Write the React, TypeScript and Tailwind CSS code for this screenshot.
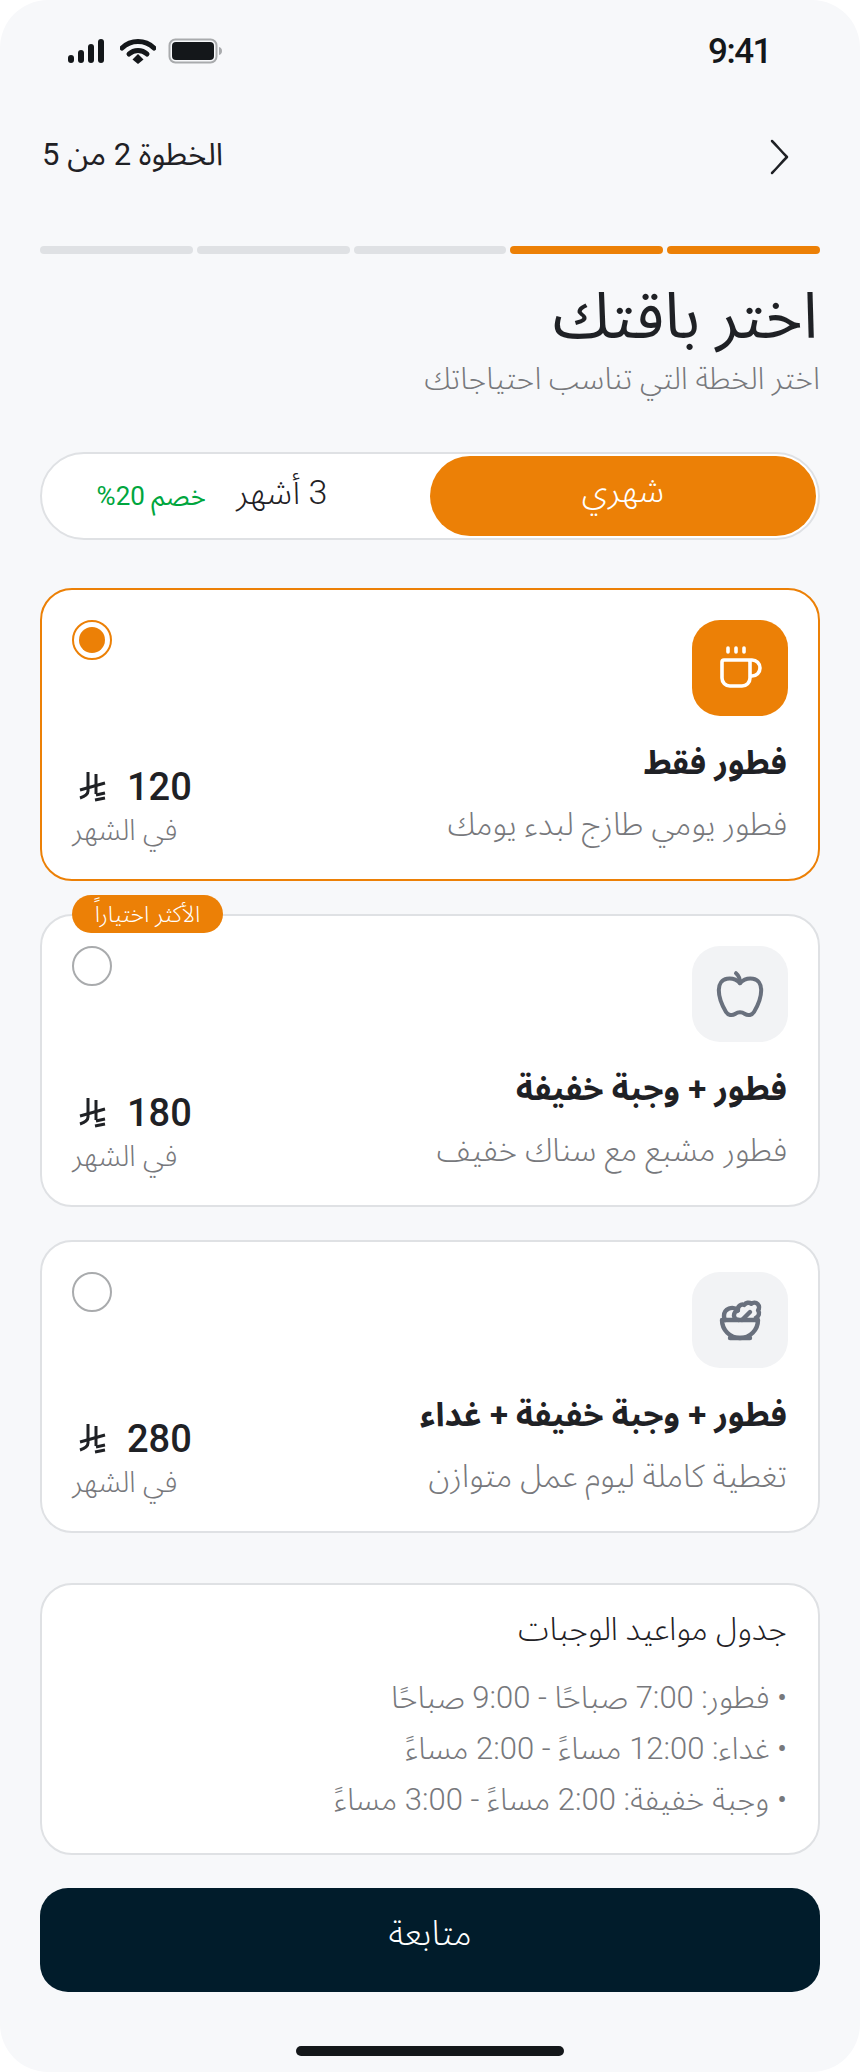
import { Coffee, Salad } from "lucide-react";
import type { ReactNode } from "react";

const arabic = "font-['Roboto','Noto_Sans_Arabic','Noto_Sans','DejaVu_Sans',sans-serif]";

function StatusIcons() {
  return (
    <div dir="ltr" className="flex items-center">
      <svg className="mr-[16px]" width="36" height="24" viewBox="0 0 36 24" fill="#14171a">
        <rect x="0" y="16" width="6" height="8" rx="3" />
        <rect x="10" y="11" width="6" height="13" rx="3" />
        <rect x="20" y="5" width="6" height="19" rx="3" />
        <rect x="30" y="0" width="6" height="24" rx="3" />
      </svg>
      <svg className="mr-[12px]" width="36" height="26" viewBox="0 0 36 26" fill="none">
        <path d="M2 10a23 23 0 0 1 32 0" stroke="#14171a" strokeWidth="5" strokeLinecap="round" />
        <path d="M9 16a13 13 0 0 1 18 0" stroke="#14171a" strokeWidth="5" strokeLinecap="round" />
        <path d="M12.5 21.5 18 16l5.500 5.500L18 26z" fill="#14171a" />
      </svg>
      <svg width="56" height="26" viewBox="0 0 56 26" fill="none">
        <rect x="1.500" y="1.500" width="47" height="23" rx="6" stroke="#a9abad" strokeWidth="2" />
        <rect x="4" y="4" width="42" height="18" rx="4" fill="#14171a" />
        <path d="M51 9c2 .5 3 2 3 4s-1 3.500-3 4z" fill="#a9abad" />
      </svg>
    </div>
  );
}

function AppleIcon() {
  return (
    <svg width="48" height="48" viewBox="0 0 24 24" fill="none" stroke="currentColor" strokeWidth="2" strokeLinecap="round" strokeLinejoin="round">
      <path d="M12 6.600C10.500 5 8 4 5.500 4.400C3 4.800 1.400 7 1.400 10C1.400 14 3.500 18.500 5 21C6 22.600 8 23 9.500 22C11 21 13 21 14.500 22C16 23 18 22.600 19 21C20.500 18.500 22.600 14 22.600 10C22.600 7 21 4.800 18.500 4.400C16 4 13.500 5 12 6.600Z" />
      <path d="M10 1.600c1.200 1 2 3 2 5" />
    </svg>
  );
}

function Riyal() {
  return (
    <svg width="30" height="32" viewBox="0 0 30 32" fill="none" stroke="#1f2125" strokeWidth="3">
      <path d="M10 1v19c0 3-2 5-8 7" />
      <path d="M18 3v20" />
      <path d="M2 19 27 12" />
      <path d="M18 24l9-2" />
      <path d="M17 29 27 27" />
    </svg>
  );
}

function Radio({ on }: { on: boolean }) {
  return (
    <div className={`flex h-[40px] w-[40px] items-center justify-center rounded-full border-2 bg-white ${on ? "border-[#ec8006]" : "border-[#a9abad]"}`}>
      {on ? <div className="h-[26px] w-[26px] rounded-full bg-[#ec8006]" /> : null}
    </div>
  );
}

function Plan(props: { icon: ReactNode; on?: boolean; title: string; desc: string; price: string; badge?: boolean }) {
  const { icon, on = false, title, desc, price, badge = false } = props;
  return (
    <div className={`relative h-[293px] rounded-[32px] border-2 bg-white pl-[30px] pr-[30px] pt-[30px] ${on ? "border-[#ec8006]" : "border-[#dfe1e4]"}`}>
      {badge ? (
        <div className="absolute left-[30px] top-[-21px] flex h-[38px] w-[151px] items-center justify-center rounded-full bg-[#ec8006] text-[23px] font-light leading-none text-white">
          الأكثر اختياراً
        </div>
      ) : null}
      <div className="flex items-start justify-between">
        <div className={`flex h-[96px] w-[96px] items-center justify-center rounded-[28px] ${on ? "bg-[#ec8006] text-white" : "bg-[#f2f3f5] text-[#69707d]"}`}>
          {icon}
        </div>
        <Radio on={on} />
      </div>
      <div className="mt-[27px] flex items-end justify-between">
        <div className="pr-[1px]">
          <div className="text-[33px] font-bold leading-[40px] text-[#1f2125]">{title}</div>
          <div className="mt-[22px] text-[32px] font-light leading-[38px] text-[#77787c]">{desc}</div>
        </div>
        <div className="mb-[-4px] w-[140px]">
          <div dir="ltr" className="flex items-center gap-[19px] pl-[6px]">
            <Riyal />
            <span className="text-[38px] font-medium leading-[48px] text-[#1f2125]">{price}</span>
          </div>
          <div className="mt-[2px] text-left text-[29px] font-light leading-[34px] text-[#77787c]">في الشهر</div>
        </div>
      </div>
    </div>
  );
}

export default function App() {
  return (
    <div className="h-[2072px] w-[860px] bg-white">
      <div dir="rtl" className={`${arabic} relative h-[2072px] w-[860px] overflow-hidden rounded-[48px] bg-[#f7f8fa] px-[40px] pt-[34px]`}>
        <div className="flex h-[34px] items-center justify-between pl-[28px] pr-[49px]">
          <span className="text-[35px] font-medium leading-none tracking-[-1.5px] text-[#14171a]">9:41</span>
          <StatusIcons />
        </div>
        <div className="mt-[68px] flex h-[40px] items-center justify-between pl-[2px] pr-[30px]">
          <svg className="mt-[2px]" width="20" height="36" viewBox="0 0 20 36" fill="none">
            <path d="M2 2c5 5 9 10 15 16-6 6-10 11-15 16" stroke="#1f2125" strokeWidth="2.500" strokeLinecap="round" strokeLinejoin="round" />
          </svg>
          <span className="mb-[2px] text-[31px] font-normal leading-[40px] text-[#1f2125]">الخطوة 2 من 5</span>
        </div>
        <div className="mt-[70px] flex gap-[4px]">
          <div className="h-[8px] flex-1 rounded-full bg-[#ec8006]" />
          <div className="h-[8px] flex-1 rounded-full bg-[#ec8006]" />
          <div className="h-[8px] flex-1 rounded-full bg-[#dfe1e4]" />
          <div className="h-[8px] flex-1 rounded-full bg-[#dfe1e4]" />
          <div className="h-[8px] flex-1 rounded-full bg-[#dfe1e4]" />
        </div>
        <h1 className="mt-[27px] pr-[2px] text-[64px] font-normal leading-[72px] text-[#1f2125]">اختر باقتك</h1>
        <p className="mt-[8px] text-[30.5px] font-light leading-[36px] text-[#77787c]">اختر الخطة التي تناسب احتياجاتك</p>

        <div className="mt-[55px] flex h-[88px] items-center rounded-full border-2 border-[#dfe1e4] bg-white p-[2px]">
          <div className="flex h-[80px] w-[386px] items-center justify-center rounded-full bg-[#ec8006] pb-[12px] text-[34px] font-light text-white">شهري</div>
          <div className="flex flex-1 items-center justify-center gap-[30px] pr-[50px]">
            <span className="mb-[8px] text-[34px] font-light text-[#1f2125]">3 أشهر</span>
            <span className="text-[26px] text-[#00a63e]">خصم 20%</span>
          </div>
        </div>

        <div className="mt-[48px] flex flex-col gap-[33px]">
          <Plan on icon={<Coffee size={48} strokeWidth={1.8} />} title="فطور فقط" desc="فطور يومي طازج لبدء يومك" price="120" />
          <Plan badge icon={<AppleIcon />} title="فطور + وجبة خفيفة" desc="فطور مشبع مع سناك خفيف" price="180" />
          <Plan icon={<Salad size={48} strokeWidth={2.2} />} title="فطور + وجبة خفيفة + غداء" desc="تغطية كاملة ليوم عمل متوازن" price="280" />
        </div>

        <div className="mt-[50px] h-[272px] rounded-[32px] border-2 border-[#dfe1e4] bg-white pl-[29px] pr-[31px] pt-[24px]">
          <div className="text-[32px] font-light leading-[40px] text-[#1f2125]">جدول مواعيد الوجبات</div>
          <ul className="mt-[29px] flex flex-col gap-[11px] text-[31px] font-light leading-[40px] text-[#77787c]">
            <li>• فطور: 7:00 صباحًا - 9:00 صباحًا</li>
            <li>• غداء: 12:00 مساءً - 2:00 مساءً</li>
            <li>• وجبة خفيفة: 2:00 مساءً - 3:00 مساءً</li>
          </ul>
        </div>

        <button className="mt-[33px] flex h-[104px] w-full items-center justify-center rounded-[28px] bg-[#011c2b] pb-[12px] text-[35px] font-light text-white">متابعة</button>

        <div className="absolute bottom-[16px] left-[296px] h-[10px] w-[268px] rounded-full bg-[#14171a]" />
      </div>
    </div>
  );
}
